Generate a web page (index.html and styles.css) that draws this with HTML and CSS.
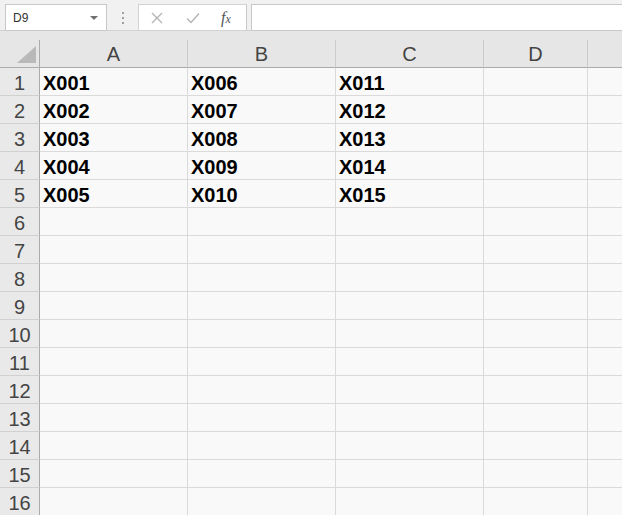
FILE: index.html
```html
<!DOCTYPE html>
<html>

<head>
  <meta charset="UTF-8">
  <meta name="viewport" content="width=device-width, initial-scale=1.0">
  <title>Sheet</title>
  <link rel="stylesheet" href="styles.css">
</head>

<body>
  <div class="toolbar">
    <div class="namebox">
      <span>D9</span>
      <span class="arrow"></span>
    </div>
    <div class="grip"><i></i><i></i><i></i></div>
    <div class="fxbox">
      <svg class="tool" width="14" height="14" viewBox="0 0 14 14">
        <path d="M2 2 L12 12 M12 2 L2 12" stroke="#b5b5b5" stroke-width="1.4" fill="none" />
      </svg>
      <svg class="tool" width="14" height="14" viewBox="0 0 14 14">
        <path d="M1 7.5 L5 11.5 L13 2.5" stroke="#b5b5b5" stroke-width="1.5" fill="none" />
      </svg>
      <span class="fx">f<sub>x</sub></span>
    </div>
    <div class="formula"></div>
  </div>

  <div class="sheet head">
    <div class="corner"><span class="tri"></span></div>
    <div class="colhead">A</div>
    <div class="colhead">B</div>
    <div class="colhead">C</div>
    <div class="colhead">D</div>
    <div class="colhead last"></div>
  </div>
  <div class="rows" id="rows"></div>

  <script>
    // 三欄資料，每欄五筆
    const data = [
      ['X001', 'X006', 'X011'],
      ['X002', 'X007', 'X012'],
      ['X003', 'X008', 'X013'],
      ['X004', 'X009', 'X014'],
      ['X005', 'X010', 'X015']
    ]

    const rows = document.querySelector('#rows')
    for (let i = 1; i <= 16; i++) {
      const vals = data[i - 1] || ['', '', '']
      const row = document.createElement('div')
      row.className = 'sheet'
      row.innerHTML = `<div class="rowhead">${i}</div>` +
        vals.map(v => `<div class="cell">${v}</div>`).join('') +
        '<div class="cell"></div><div class="cell last"></div>'
      rows.appendChild(row)
    }
  </script>
</body>

</html>
```

FILE: styles.css
```css
html {
  background: #f9f9f9;
}

body {
  margin: 0;
  overflow: hidden;
  font-family: "Liberation Sans", Arial, sans-serif;
}

.toolbar {
  display: flex;
  align-items: flex-start;
  height: 31px;
  padding-top: 4px;
  box-sizing: border-box;
  background: #f1f1f1;
  border-bottom: 1px solid #d2d2d2;
}

.namebox {
  display: flex;
  align-items: center;
  justify-content: space-between;
  width: 102px;
  height: 27px;
  margin-left: 5px;
  padding: 0 8px 0 7px;
  box-sizing: border-box;
  background: #fff;
  border: 1px solid #c8c8c8;
  font-size: 12px;
  color: #333;
}

.arrow {
  width: 0;
  height: 0;
  border-left: 4px solid transparent;
  border-right: 4px solid transparent;
  border-top: 4px solid #707070;
}

.grip {
  display: flex;
  flex-direction: column;
  gap: 3px;
  width: 31px;
  padding-top: 8px;
  align-items: center;
}

.grip i {
  width: 2px;
  height: 2px;
  background: #a0a0a0;
}

.fxbox {
  display: flex;
  align-items: center;
  width: 109px;
  height: 27px;
  box-sizing: border-box;
  padding-left: 11px;
  background: #fff;
  border: 1px solid #d2d2d2;
  border-right-color: #c8c8c8;
}

.tool {
  margin-right: 22px;
}

.fx {
  margin-left: -1px;
  font-family: "Liberation Serif", serif;
  font-style: italic;
  font-size: 16px;
  color: #555;
}

.fx sub {
  font-size: 12px;
  vertical-align: 0;
}

.formula {
  flex: 1;
  height: 27px;
  margin-left: 4px;
  margin-right: -2px;
  background: #fff;
  border: 1px solid #c8c8c8;
  box-sizing: border-box;
}

.sheet {
  display: grid;
  grid-template-columns: 40px 148px 148px 148px 104px 1fr;
}

.head {
  background: #e6e6e6;
  padding-top: 9px;
}

.corner,
.colhead {
  height: 28px;
  box-sizing: border-box;
  background: #e6e6e6;
  border-bottom: 1px solid #ababab;
  border-right: 1px solid #cbcbcb;
  font-size: 20px;
  line-height: 25px;
  padding-top: 2px;
  text-align: center;
  color: #444;
}

.corner {
  position: relative;
  border-right-color: #ababab;
}

.tri {
  position: absolute;
  right: 3px;
  bottom: 4px;
  width: 0;
  height: 0;
  border-left: 19px solid transparent;
  border-bottom: 17px solid #b9b9b9;
}

.rowhead,
.cell {
  height: 28px;
  box-sizing: border-box;
  border-bottom: 1px solid #dadada;
  font-size: 20px;
  line-height: 23px;
  padding-top: 4px;
}

.rowhead {
  background: #e9e9e9;
  border-right: 1px solid #ababab;
  border-bottom-color: #d0d0d0;
  text-align: center;
  color: #444;
}

.cell {
  border-right: 1px solid #dadada;
  padding-left: 3px;
  font-weight: bold;
  color: #000;
}

.last {
  border-right: 0;
}
```
